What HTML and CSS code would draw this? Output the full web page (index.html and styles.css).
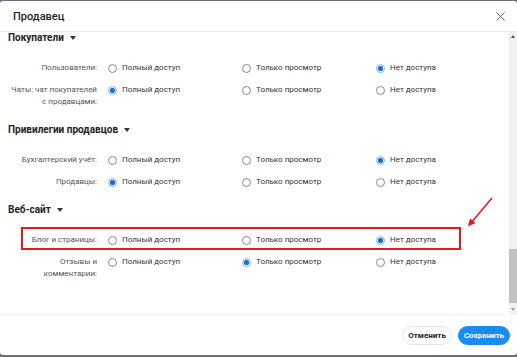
FILE: index.html
```html
<!DOCTYPE html>
<html lang="ru">
<head>
    <meta charset="UTF-8">
    <title>Продавец</title>
    <link rel="stylesheet" href="styles.css">
</head>
<body>
    <div class="dialog">
        <!-- Header -->
        <div class="dialog-header">
            <span class="dialog-title">Продавец</span>
            <svg class="close" width="9" height="9" viewBox="0 0 9 9">
                <path d="M0.5 0.5 L8.5 8.5 M8.5 0.5 L0.5 8.5" stroke="#666" stroke-width="1" fill="none"/>
            </svg>
        </div>

        <!-- Scrollable body -->
        <div class="dialog-body">
            <div class="content">
                <div class="section">
                    <div class="section-title">Покупатели <span class="caret"></span></div>
                    <div class="row">
                        <div class="label">Пользователи:</div>
                        <div class="opt"><span class="radio"></span>Полный доступ</div>
                        <div class="opt"><span class="radio"></span>Только просмотр</div>
                        <div class="opt"><span class="radio checked"></span>Нет доступа</div>
                    </div>
                    <div class="row">
                        <div class="label">Чаты: чат покупателей<br>с продавцами:</div>
                        <div class="opt"><span class="radio checked"></span>Полный доступ</div>
                        <div class="opt"><span class="radio"></span>Только просмотр</div>
                        <div class="opt"><span class="radio"></span>Нет доступа</div>
                    </div>
                </div>

                <div class="section">
                    <div class="section-title">Привилегии продавцов <span class="caret"></span></div>
                    <div class="row">
                        <div class="label">Бухгалтерский учёт:</div>
                        <div class="opt"><span class="radio"></span>Полный доступ</div>
                        <div class="opt"><span class="radio"></span>Только просмотр</div>
                        <div class="opt"><span class="radio checked"></span>Нет доступа</div>
                    </div>
                    <div class="row">
                        <div class="label">Продавцы:</div>
                        <div class="opt"><span class="radio checked"></span>Полный доступ</div>
                        <div class="opt"><span class="radio"></span>Только просмотр</div>
                        <div class="opt"><span class="radio"></span>Нет доступа</div>
                    </div>
                </div>

                <div class="section">
                    <div class="section-title">Веб-сайт <span class="caret"></span></div>
                    <div class="row highlighted">
                        <div class="label">Блог и страницы:</div>
                        <div class="opt"><span class="radio"></span>Полный доступ</div>
                        <div class="opt"><span class="radio"></span>Только просмотр</div>
                        <div class="opt"><span class="radio checked"></span>Нет доступа</div>
                    </div>
                    <div class="row">
                        <div class="label">Отзывы и<br>комментарии:</div>
                        <div class="opt"><span class="radio"></span>Полный доступ</div>
                        <div class="opt"><span class="radio checked"></span>Только просмотр</div>
                        <div class="opt"><span class="radio"></span>Нет доступа</div>
                    </div>
                </div>

                <!-- Annotation arrow -->
                <svg class="arrow" width="30" height="32" viewBox="0 0 30 32">
                    <path d="M26 2 L5 27" stroke="#e3191e" stroke-width="1.6" fill="none"/>
                    <path d="M2 30.5 L4 22.5 L9.5 27 Z" fill="#e3191e"/>
                </svg>
            </div>

            <!-- Scrollbar -->
            <div class="scrollbar">
                <span class="arrow-up"></span>
                <div class="track"><div class="thumb"></div></div>
                <span class="arrow-down"></span>
            </div>
        </div>

        <!-- Footer -->
        <div class="dialog-footer">
            <button class="btn btn-cancel">Отменить</button>
            <button class="btn btn-save">Сохранить</button>
        </div>
    </div>
</body>
</html>
```

FILE: styles.css
```css
/* Page */
body {
    margin: 0;
    background-color: #6f6f6f;
    font-family: Roboto, "Liberation Sans", Arial, sans-serif;
    color: #333;
}

/* Dialog frame */
.dialog {
    margin-top: 1px;
    height: 354px;
    background-color: #fff;
    border-radius: 3px;
    display: flex;
    flex-direction: column;
    overflow: hidden;
}

.dialog-header {
    height: 30px;
    flex: none;
    display: flex;
    align-items: center;
    justify-content: space-between;
    padding: 0 12px 0 13px;
    border-bottom: 1px solid #e7ecf4;
}

.dialog-title {
    font-size: 11px;
    font-weight: 500;
    color: #222;
}

/* Body with scrollbar */
.dialog-body {
    flex: 1;
    display: flex;
    min-height: 0;
}

.content {
    flex: 1;
    position: relative;
    overflow: hidden;
}

.section {
    margin-bottom: 16px;
}

.section-title {
    font-size: 10px;
    font-weight: 700;
    line-height: 12px;
    color: #222;
    padding-left: 8px;
    margin-bottom: 18px;
    display: flex;
    align-items: center;
}

.caret {
    display: inline-block;
    margin-left: 6px;
    border-left: 3px solid transparent;
    border-right: 3px solid transparent;
    border-top: 4px solid #333;
}

.row {
    display: grid;
    grid-template-columns: 97px 123px 123px 1fr;
    column-gap: 11px;
    font-size: 8px;
    line-height: 12px;
    margin-bottom: 10px;
    position: relative;
}

.row .opt {
    display: flex;
    align-items: flex-start;
    color: #333;
}

.label {
    text-align: right;
    color: #555;
}

.radio {
    width: 7px;
    height: 7px;
    border: 1px solid #888;
    border-radius: 50%;
    margin: 1.5px 5px 0 0;
    flex: none;
    background-color: #fff;
}

.radio.checked {
    border-color: #7ab0f5;
    background: radial-gradient(circle, #1a6ee8 0, #1a6ee8 2.4px, #fff 2.9px);
}

/* Red annotation box around a row */
.highlighted::after {
    content: "";
    position: absolute;
    left: 21px;
    top: -7px;
    width: 436px;
    height: 19px;
    border: 2px solid #e3191e;
}

.arrow {
    position: absolute;
    left: 466px;
    top: 164px;
}

/* Fake scrollbar */
.scrollbar {
    width: 8px;
    flex: none;
    background-color: #f1f1f1;
    display: flex;
    flex-direction: column;
    align-items: center;
}

.track {
    flex: 1;
    width: 100%;
    display: flex;
    flex-direction: column;
    justify-content: flex-end;
}

.thumb {
    height: 54px;
    background-color: #c1c1c1;
    margin-bottom: 2px;
}

.arrow-up,
.arrow-down {
    display: block;
    border-left: 2.5px solid transparent;
    border-right: 2.5px solid transparent;
    margin: 3px 0;
}

.arrow-up {
    border-bottom: 3px solid #505050;
}

.arrow-down {
    border-top: 3px solid #a3a3a3;
}

/* Footer */
.dialog-footer {
    height: 40px;
    flex: none;
    border-top: 1px solid #f3f3f3;
    display: flex;
    align-items: center;
    justify-content: flex-end;
    gap: 6px;
    padding-right: 7px;
}

.btn {
    font-family: Roboto, "Liberation Sans", Arial, sans-serif;
    font-size: 8px;
    font-weight: 700;
    height: 19px;
    border-radius: 10px;
    padding: 0 5px;
    cursor: pointer;
}

.btn-cancel {
    background-color: #fff;
    border: 1px solid #e2e6ec;
    color: #222;
}

.btn-save {
    background-color: #1a8cf0;
    border: 1px solid #1a8cf0;
    color: #fff;
}
```
